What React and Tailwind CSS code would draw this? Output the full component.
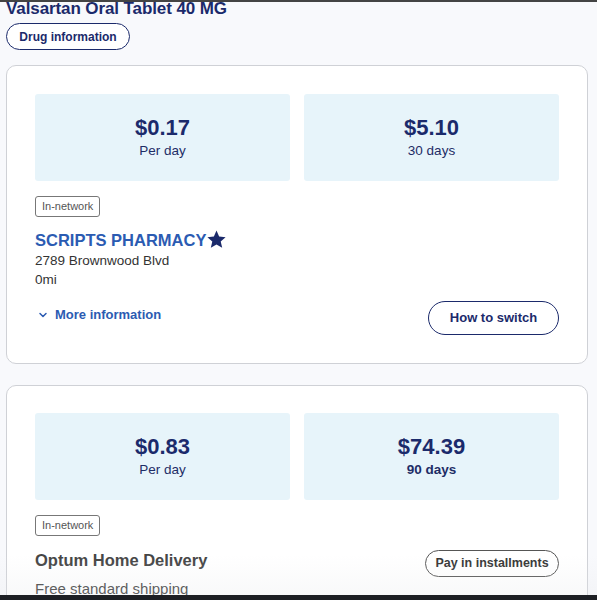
import React from 'react'

const navy = 'text-[#1b2a6b]'

const PriceBox = ({ amount, label, boldLabel }) => (
    <div className="flex-1 h-[87px] bg-[#e7f4fa] rounded-[3px] flex flex-col items-center justify-center">
        <div className={`text-[22px] font-bold leading-[26px] mt-[1px] ${navy}`}>{amount}</div>
        <div className={`text-[13.5px] leading-5 text-[#1e2d66] ${boldLabel ? 'font-bold' : ''}`}>{label}</div>
    </div>
)

const Badge = () => (
    <div className="flex mt-[15px]">
        <span className="border border-[#777] rounded-[3px] px-[6px] h-[21px] leading-[19px] text-[11px] text-[#555]">
            In-network
        </span>
    </div>
)

const App = () => {
    return (
        <div className="relative w-[597px] h-[600px] overflow-hidden bg-[#f8f9fc]" style={{ fontFamily: '"Liberation Sans", Arial, sans-serif' }}>
            <div className="h-[2px] bg-[#444]" />
            <div className="pl-[6px] pr-[9px]">
                <h1 className={`text-[17px] font-bold leading-5 -mt-[3px] tracking-[-0.1px] ${navy}`}>Valsartan Oral Tablet 40 MG</h1>
                <button className={`mt-[4px] h-[27px] w-[124px] rounded-full border border-[#1b2a6b] bg-white text-[12px] font-bold ${navy}`}>
                    Drug information
                </button>

                {/* Retail pharmacy */}
                <section className="mt-[15px] bg-white border border-[#cfd1d6] rounded-[10px] px-[28px] pt-[28px] pb-[28px]">
                    <div className="flex gap-[14px]">
                        <PriceBox amount="$0.17" label="Per day" />
                        <PriceBox amount="$5.10" label="30 days" />
                    </div>
                    <Badge />
                    <div className="mt-[13px] flex items-center text-[16.5px] font-bold text-[#2b5bb2] leading-5">
                        SCRIPTS PHARMACY
                        <svg viewBox="0 0 24 24" className="w-[21px] h-[21px] -mt-[2px]" fill="#1b2a6b">
                            <path d="M12 1.8l3 6.9 7.4.6-5.6 4.9 1.7 7.3L12 17.6l-6.5 3.9 1.7-7.3L1.6 9.3 9 8.7z" />
                        </svg>
                    </div>
                    <div className="text-[13.5px] text-[#333] leading-[19px] mt-[1px]">2789 Brownwood Blvd</div>
                    <div className="text-[13.5px] text-[#333] leading-[19px]">0mi</div>
                    <div className="flex items-center justify-between mt-[12px]">
                        <button className="flex items-center gap-[6px] ml-[2px] mb-[6px] text-[13px] font-bold text-[#2b5bb2]">
                            <svg viewBox="0 0 24 24" className="w-[12px] h-[12px]" fill="none" stroke="#2b5bb2" strokeWidth="3" strokeLinecap="round" strokeLinejoin="round">
                                <path d="M6 9l6 6 6-6" />
                            </svg>
                            More information
                        </button>
                        <button className={`h-[34px] w-[131px] rounded-full border border-[#1b2a6b] bg-white text-[13px] font-bold ${navy}`}>
                            How to switch
                        </button>
                    </div>
                </section>

                {/* Mail order */}
                <section className="mt-[21px] bg-white border border-[#cfd1d6] rounded-[10px] px-[28px] pt-[27px] pb-[28px]">
                    <div className="flex gap-[14px]">
                        <PriceBox amount="$0.83" label="Per day" />
                        <PriceBox amount="$74.39" label="90 days" boldLabel />
                    </div>
                    <Badge />
                    <div className="flex items-center justify-between mt-[14px]">
                        <div className="text-[16.5px] font-bold text-[#444] leading-5 mb-[7px]">Optum Home Delivery</div>
                        <button className="h-[27px] w-[134px] rounded-full border border-[#555] bg-white text-[12.5px] font-bold text-[#333]">
                            Pay in installments
                        </button>
                    </div>
                    <div className="text-[15px] text-[#3a3a3a] leading-5 mt-[2px]">Free standard shipping</div>
                    <div className="h-[40px]" />
                </section>
            </div>

            {/* bottom fade and bar */}
            <div className="absolute left-0 right-0 bottom-[5px] h-[40px] bg-gradient-to-b from-transparent to-[#e6e7ea]/25 pointer-events-none" />
            <div className="absolute left-0 right-0 bottom-0 h-[5px] bg-[#1d1f24]" />
        </div>
    )
}

export default App
